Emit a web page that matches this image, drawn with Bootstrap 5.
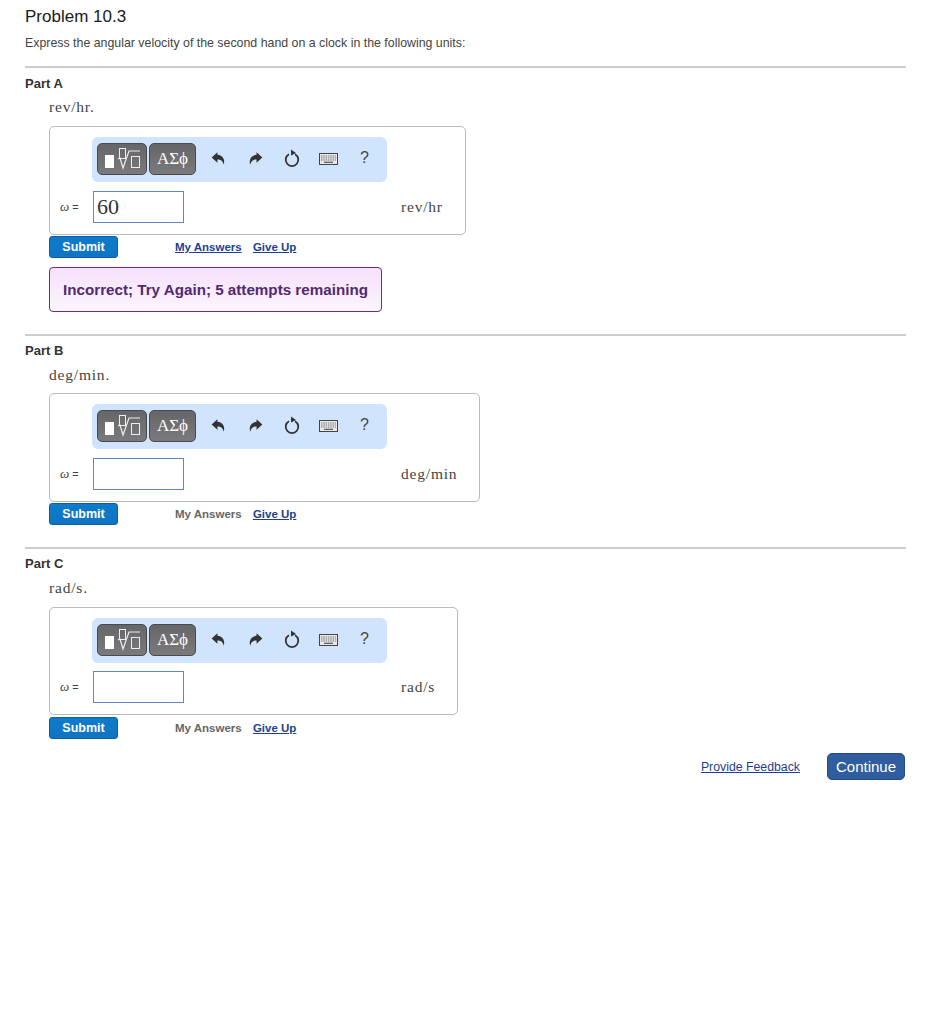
<!DOCTYPE html>
<html lang="en">

<head>
    <meta charset="UTF-8">
    <meta name="viewport" content="width=device-width, initial-scale=1">
    <title>Problem 10.3</title>
    <link href="https://cdn.jsdelivr.net/npm/bootstrap@5.3.3/dist/css/bootstrap.min.css" rel="stylesheet">
    <style>
        body {
            font-family: "Liberation Sans", Arial, sans-serif;
            color: #222;
            background: #fff;
        }

        .page-wrap {
            padding: 7px 25px 0 25px;
        }

        .prob-title {
            font-size: 17px;
            line-height: 19px;
            font-weight: 400;
            color: #1a1a1a;
            margin: 0;
        }

        .prob-text {
            font-size: 12.37px;
            line-height: 16px;
            color: #444;
            margin: 9px 0 15px;
        }

        .part-line {
            border: 0;
            height: 2px;
            background: #ccc;
            opacity: 1;
            margin: 0;
        }

        .part-name {
            font-size: 13px;
            font-weight: 700;
            line-height: 16px;
            color: #333;
            margin: 7px 0 0;
        }

        .first-part .part-name {
            margin-top: 8px;
        }

        .first-part .part-ask {
            margin: 6px 0 10px;
        }

        .last-part .part-ask {
            margin-bottom: 10px;
        }

        .last-part .input-row {
            margin-top: 8px;
        }

        .last-part .action-row {
            margin-top: 2px;
        }

        .part-body {
            padding-left: 24px;
        }

        .part-ask {
            font-family: "Liberation Serif", "Times New Roman", serif;
            font-size: 15.5px;
            line-height: 18px;
            letter-spacing: .8px;
            color: #444;
            margin: 7px 0 9px;
        }

        .answer-box {
            display: inline-block;
            border: 1px solid #bbb;
            border-radius: 5px;
            padding: 10px 22px 11px 10px;
            vertical-align: top;
        }

        .tool-bar {
            width: 295px;
            height: 45px;
            margin-left: 32px;
            padding: 6px 5px;
            background: #d0e4fd;
            border-radius: 6px;
        }

        .tpl-btn {
            height: 32px;
            border: 1px solid #4a4a4c;
            border-radius: 5px;
            background: linear-gradient(#666668, #7a7a7c);
            color: #fff;
            padding: 0;
        }

        .tpl-root {
            width: 50px;
        }

        .tpl-greek {
            width: 47px;
            margin-left: 2px;
            font-family: "Liberation Serif", "Times New Roman", serif;
            font-size: 17px;
            line-height: 28px;
        }

        .tool-icon {
            position: absolute;
            top: 6px;
        }

        .tool-slot {
            position: relative;
            flex: 1;
            height: 32px;
        }

        .tool-help {
            position: absolute;
            top: 5px;
            left: 164px;
            font-size: 16px;
            line-height: 19px;
            color: #444;
        }

        .input-row {
            margin-top: 9px;
            height: 32px;
        }

        .omega-label {
            width: 33px;
            font-size: 11px;
            color: #444;
        }

        .omega-label i {
            font-family: "Liberation Serif", serif;
            font-size: 13px;
        }

        .answer-field {
            width: 91px;
            height: 32px;
            border: 1px solid #5a88c8;
            background: #fff;
            font-family: "Liberation Serif", "Times New Roman", serif;
            font-size: 22px;
            line-height: 30px;
            color: #333;
            padding: 0 3px;
            border-radius: 0;
        }

        .unit-text {
            margin-left: 217px;
            font-family: "Liberation Serif", "Times New Roman", serif;
            font-size: 15.5px;
            letter-spacing: .8px;
            color: #444;
            white-space: nowrap;
        }

        .action-row {
            margin-top: 1px;
            height: 22px;
        }

        .btn-submit {
            width: 69px;
            height: 22px;
            padding: 0;
            border: 1px solid #0f5f9f;
            border-radius: 3px;
            background: linear-gradient(#0f7bcb, #0f74c2);
            color: #fff;
            font-size: 12.5px;
            font-weight: 700;
            line-height: 19px;
        }

        .act-links {
            margin-left: 57px;
            font-size: 11.5px;
            font-weight: 700;
            line-height: 22px;
        }

        .act-link {
            color: #1c3f94;
            text-decoration: underline;
        }

        .act-off {
            color: #666;
            text-decoration: none;
        }

        .act-gap {
            margin-left: 8px;
        }

        .wrong-note {
            display: inline-block;
            margin: 9px 0 22px;
            padding: 13px;
            width: 333px;
            height: 45px;
            border: 1px solid #6b2c82;
            border-radius: 4px;
            background: linear-gradient(#f5e1fb, #fcf5fe);
            color: #53296f;
            font-size: 15.2px;
            font-weight: 700;
            line-height: 18px;
            white-space: nowrap;
        }

        .part-spacer {
            height: 22px;
        }

        .foot-row {
            margin-top: 14px;
            padding-right: 1px;
        }

        .feedback-link {
            color: #1c3f94;
            font-size: 12.3px;
            margin-top: 2px;
            margin-right: 27px;
        }

        .btn-continue {
            width: 78px;
            height: 27px;
            padding: 0;
            background: #2f5d9e;
            border: 1px solid #234a85;
            border-radius: 5px;
            color: #fff;
            font-size: 15px;
            line-height: 23px;
        }
    </style>
</head>

<body>

    <div class="page-wrap">
        <h1 class="prob-title">Problem 10.3</h1>
        <p class="prob-text">Express the angular velocity of the second hand on a clock in the following units:</p>

        <!-- Part A -->
        <div class="first-part">
            <hr class="part-line">
            <h2 class="part-name">Part A</h2>
            <div class="part-body">
                <p class="part-ask">rev/hr.</p>
                <div class="answer-box" data-unit="rev/hr" data-value="60"></div>
                <div class="d-flex action-row" data-off="0"></div>
                <div class="wrong-note">Incorrect; Try Again; 5 attempts remaining</div>
            </div>
        </div>

        <!-- Part B -->
        <hr class="part-line">
        <h2 class="part-name">Part B</h2>
        <div class="part-body">
            <p class="part-ask">deg/min.</p>
            <div class="answer-box" data-unit="deg/min" data-value=""></div>
            <div class="d-flex action-row" data-off="1"></div>
            <div class="part-spacer"></div>
        </div>

        <!-- Part C -->
        <div class="last-part">
            <hr class="part-line">
            <h2 class="part-name">Part C</h2>
            <div class="part-body">
                <p class="part-ask">rad/s.</p>
                <div class="answer-box" data-unit="rad/s" data-value=""></div>
                <div class="d-flex action-row" data-off="1"></div>
            </div>
        </div>

        <div class="d-flex justify-content-end align-items-center foot-row">
            <a href="#" class="feedback-link">Provide Feedback</a>
            <button type="button" class="btn btn-continue">Continue</button>
        </div>
    </div>

    <script src="https://cdn.jsdelivr.net/npm/bootstrap@5.3.3/dist/js/bootstrap.bundle.min.js"></script>
    <script>
        const toolBar = `
            <div class="d-flex tool-bar">
                <button type="button" class="tpl-btn tpl-root">
                    <svg width="48" height="30" viewBox="0 0 48 30" fill="none">
                        <rect x="7" y="11" width="9" height="13" fill="#fff"/>
                        <rect x="21.5" y="4.5" width="6" height="10" stroke="#eee"/>
                        <path d="M20 15l2 -1l3 10l6 -17h11" stroke="#eee" stroke-width="1.2"/>
                        <rect x="33.500" y="12.500" width="8" height="11" stroke="#eee"/>
                    </svg>
                </button>
                <button type="button" class="tpl-btn tpl-greek">&Alpha;&Sigma;&#981;</button>
                <div class="tool-slot">
                    <svg class="tool-icon" style="left:15px" width="15" height="19" viewBox="0 0 14 18">
                        <path d="M6 3L0.500 8l5.500 5V10c3 0 5 1 6 5 1.500-5-1-9-6-9.500z" fill="#333"/>
                    </svg>
                    <svg class="tool-icon" style="left:52px" width="15" height="19" viewBox="0 0 14 18">
                        <path d="M8 3l5.500 5L8 13V10c-3 0-5 1-6 5C.5 10 3 6 8 5.500z" fill="#333"/>
                    </svg>
                    <svg class="tool-icon" style="left:87px" width="18" height="20" viewBox="0 0 18 20" fill="none">
                        <path d="M6 5.200a6.300 6.300 0 1 0 6 0" stroke="#333" stroke-width="1.800"/>
                        <path d="M8 .5l5 3.500-5 2.500z" fill="#333"/>
                    </svg>
                    <svg class="tool-icon" style="left:123px;top:10px" width="19" height="12" viewBox="0 0 19 12" fill="none">
                        <rect x=".5" y=".5" width="18" height="11" fill="#e8e8e8" stroke="#444"/>
                        <path d="M2 3h15M2 5h15M2 7h15" stroke="#777" stroke-dasharray="1.500 .8"/>
                        <path d="M5 9.300h9" stroke="#555" stroke-width="1.200"/>
                    </svg>
                    <span class="tool-help">?</span>
                </div>
            </div>`;

        // Boxes differ only by the value and the unit
        document.querySelectorAll('.answer-box').forEach(box => {
            box.innerHTML = toolBar + `
                <div class="d-flex align-items-center input-row">
                    <span class="omega-label"><i>&omega;</i> =</span>
                    <div class="answer-field">${box.dataset.value}</div>
                    <span class="unit-text">${box.dataset.unit}</span>
                </div>`;
        });

        document.querySelectorAll('.action-row').forEach(row => {
            const off = row.dataset.off === '1' ? 'act-off' : 'act-link';
            row.innerHTML = `
                <button type="button" class="btn btn-submit">Submit</button>
                <div class="act-links">
                    <a href="#" class="${off}">My Answers</a>
                    <a href="#" class="act-link act-gap">Give Up</a>
                </div>`;
        });
    </script>
</body>

</html>
